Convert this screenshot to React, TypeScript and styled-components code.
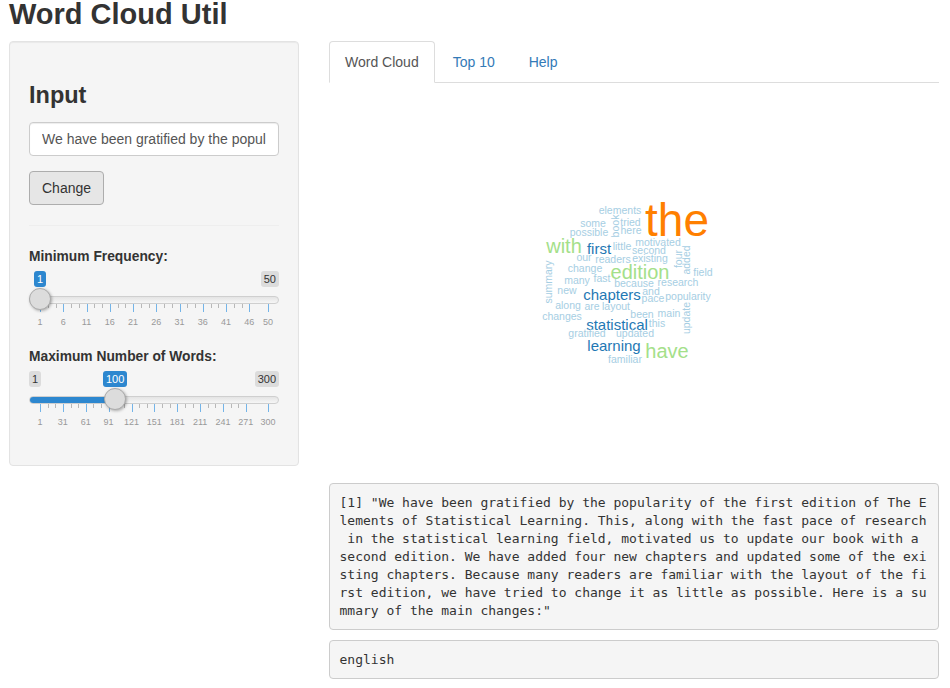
import React from 'react';
import styled, { createGlobalStyle } from 'styled-components';

const GlobalStyle = createGlobalStyle`
    html, body {
        margin: 0;
        background: #fff;
    }
    body {
        font-family: 'Liberation Sans', Arial, sans-serif;
        font-size: 14px;
        line-height: 20px;
        color: #333;
    }
    * {
        box-sizing: border-box;
    }
`;

const Page = styled.div`
    padding: 0 11px 0 9px;
`;

const Title = styled.h2`
    margin: 0 0 10px;
    height: 31px;
    font-size: 29px;
    line-height: 29px;
    font-weight: 700;
    color: #333;
`;

const Columns = styled.div`
    display: grid;
    grid-template-columns: 290px 610px;
    column-gap: 30px;
    align-items: start;
`;

const Well = styled.form`
    padding: 19px;
    background: #f5f5f5;
    border: 1px solid #e3e3e3;
    border-radius: 4px;
    box-shadow: inset 0 1px 1px rgba(0, 0, 0, 0.05);
`;

const Heading = styled.h3`
    margin: 21px 0 13px;
    font-size: 23.5px;
    line-height: 27px;
    font-weight: 700;
`;

const TextInput = styled.input`
    display: block;
    width: 100%;
    height: 34px;
    padding: 6px 12px;
    font: inherit;
    color: #555;
    background: #fff;
    border: 1px solid #ccc;
    border-radius: 4px;
    box-shadow: inset 0 1px 1px rgba(0, 0, 0, 0.075);
`;

const Button = styled.button`
    display: block;
    margin-top: 15px;
    height: 34px;
    padding: 6px 12px;
    font: inherit;
    color: #333;
    background: #e6e6e6;
    border: 1px solid #adadad;
    border-radius: 4px;
`;

const Divider = styled.hr`
    margin: 20px 0;
    border: 0;
    border-top: 1px solid #eee;
`;

const Field = styled.div`
    margin-bottom: 21px;
`;

const Label = styled.label`
    display: block;
    padding-top: 1px;
    margin-bottom: 4px;
    font-size: 13.8px;
    font-weight: 700;
`;

const SliderBox = styled.div`
    position: relative;
`;

const BadgeRow = styled.div`
    display: flex;
    justify-content: space-between;
    height: 16px;
`;

const Badge = styled.span`
    padding: 1px 3px;
    font-size: 11px;
    line-height: 14px;
    border-radius: 3px;
    color: #333;
    background: rgba(0, 0, 0, 0.1);
`;

const MaxBadge = styled(Badge)`
    margin-left: auto;
`;

const ValueBadge = styled(Badge)`
    position: absolute;
    top: 0;
    color: #fff;
    background: #2d87cf;
`;

const Track = styled.div`
    margin-top: 9px;
    height: 8px;
    overflow: hidden;
    background: linear-gradient(#e4e4e4, #f6f6f6);
    border: 1px solid #cfcfcf;
    border-radius: 8px;
`;

const TrackFill = styled.div`
    height: 8px;
    margin: -1px 0 0 -1px;
    background: #2d87cf;
`;

const Handle = styled.div`
    position: absolute;
    top: 17px;
    width: 22px;
    height: 22px;
    background: #dcdcdc;
    border: 1px solid #ababab;
    border-radius: 50%;
    box-shadow: 1px 1px 3px rgba(0, 0, 0, 0.3);
`;

const Scale = styled.div`
    position: relative;
    height: 21px;
`;

const Tick = styled.span<{ $major: boolean }>`
    position: absolute;
    top: 0;
    width: 1px;
    height: ${(p) => (p.$major ? 8 : 4)}px;
    background: ${(p) => (p.$major ? '#74b4e8' : '#b8b8b8')};
`;

const TickLabel = styled.span`
    position: absolute;
    top: 12px;
    transform: translateX(-50%);
    font-size: 9px;
    line-height: 12px;
    color: #999;
    white-space: nowrap;
`;

const Main = styled.div`
    min-width: 0;
`;

const Tabs = styled.ul`
    display: flex;
    margin: 0;
    padding: 0;
    height: 42px;
    list-style: none;
    border-bottom: 1px solid #ddd;
`;

const Tab = styled.li<{ $active?: boolean }>`
    height: 42px;
    margin-right: 2px;
    padding: 10px 15px;
    color: ${(p) => (p.$active ? '#555' : '#337ab7')};
    background: ${(p) => (p.$active ? '#fff' : 'transparent')};
    border: 1px solid ${(p) => (p.$active ? '#ddd' : 'transparent')};
    border-bottom-color: ${(p) => (p.$active ? '#fff' : 'transparent')};
    border-radius: 4px 4px 0 0;
`;

const CloudCanvas = styled.div`
    position: relative;
    height: 400px;
`;

const Word = styled.span<{ $x: number; $y: number; $size: number; $color: string; $up?: boolean }>`
    position: absolute;
    left: ${(p) => p.$x}px;
    top: ${(p) => p.$y}px;
    font-size: ${(p) => p.$size}px;
    line-height: 1;
    color: ${(p) => p.$color};
    white-space: nowrap;
    transform: translate(-50%, -50%) ${(p) => (p.$up ? 'rotate(-90deg)' : '')};
`;

const Pre = styled.pre`
    margin: 0 0 10px;
    padding: 9.5px;
    font-family: 'DejaVu Sans Mono', 'Liberation Mono', monospace;
    font-size: 13px;
    line-height: 18px;
    color: #333;
    background: #f5f5f5;
    border: 1px solid #ccc;
    border-radius: 4px;
    white-space: pre;
    overflow: hidden;
`;

const ORANGE = '#ff7f00';
const GREEN = '#a4e08a';
const BLUE = '#1f78b4';
const LIGHT = '#a6cee3';

// [word, centre x, centre y, size, colour, rotated], page coordinates
const words: [string, number, number, number, string, boolean?][] = [
    ['the', 677, 220, 46, ORANGE],
    ['elements', 620, 210, 10.5, LIGHT],
    ['book', 615, 226, 10.5, LIGHT, true],
    ['tried', 630.5, 222, 10.5, LIGHT],
    ['here', 631, 230, 10.5, LIGHT],
    ['some', 593, 223, 10.5, LIGHT],
    ['possible', 589, 232, 10.5, LIGHT],
    ['with', 564, 246, 20, GREEN],
    ['first', 599, 248, 15, BLUE],
    ['little', 622, 246, 10.5, LIGHT],
    ['motivated', 658, 242, 10.5, LIGHT],
    ['second', 649, 250, 10.5, LIGHT],
    ['existing', 650, 258, 10.5, LIGHT],
    ['four', 677.5, 259, 10.5, LIGHT, true],
    ['added', 685.5, 260, 10.5, LIGHT, true],
    ['our', 584, 257, 10.5, LIGHT],
    ['readers', 613, 259, 10.5, LIGHT],
    ['change', 585, 268, 10.5, LIGHT],
    ['edition', 640, 272, 20, GREEN],
    ['field', 703, 272, 10.5, LIGHT],
    ['summary', 548, 282, 10.5, LIGHT, true],
    ['many', 577, 280, 10.5, LIGHT],
    ['fast', 602, 278, 10.5, LIGHT],
    ['because', 634, 283, 10.5, LIGHT],
    ['research', 678, 282, 10.5, LIGHT],
    ['new', 567, 290, 10.5, LIGHT],
    ['chapters', 612, 294, 15, BLUE],
    ['and', 651, 291, 10.5, LIGHT],
    ['pace', 653, 298, 10.5, LIGHT],
    ['popularity', 688, 296, 10.5, LIGHT],
    ['along', 568, 305, 10.5, LIGHT],
    ['are', 592, 306, 10.5, LIGHT],
    ['layout', 616, 306, 10.5, LIGHT],
    ['been', 642, 314, 10.5, LIGHT],
    ['main', 669, 313, 10.5, LIGHT],
    ['update', 686, 318, 10.5, LIGHT, true],
    ['changes', 562, 316, 10.5, LIGHT],
    ['statistical', 617, 324, 15, BLUE],
    ['this', 657, 323, 10.5, LIGHT],
    ['gratified', 587, 333, 10.5, LIGHT],
    ['updated', 635, 333, 10.5, LIGHT],
    ['learning', 614, 345, 15, BLUE],
    ['have', 667, 351, 20, GREEN],
    ['familiar', 625, 359, 10.5, LIGHT],
];

const CANVAS_X = 329;
const CANVAS_Y = 83;

// usable run of the grid, inside the half-handle at each end
const GRID_START = 11;
const GRID_WIDTH = 228;

type SliderProps = {
    min: number;
    max: number;
    value: number;
    step: number;
    valueLeft: number;
    showMin?: boolean;
};

const Slider = ({ min, max, value, step, valueLeft, showMin }: SliderProps) => {
    const toX = (v: number) => GRID_START + ((v - min) / (max - min)) * GRID_WIDTH;
    const labels: number[] = [];
    for (let v = min; v < max - step / 2; v += step) labels.push(v);
    labels.push(max);
    const minors: number[] = [];
    labels.slice(0, -2).forEach((v) => {
        minors.push(toX(v + step / 3), toX(v + (2 * step) / 3));
    });
    const handleX = toX(value);
    return (
        <SliderBox>
            <BadgeRow>
                {showMin && <Badge>{min}</Badge>}
                <MaxBadge>{max}</MaxBadge>
            </BadgeRow>
            <Track>{value > min && <TrackFill style={{ width: handleX }} />}</Track>
            <Scale>
                {labels.map((v) => (
                    <Tick key={v} $major style={{ left: toX(v) }} />
                ))}
                {minors.map((x) => (
                    <Tick key={x} $major={false} style={{ left: x }} />
                ))}
                {labels.map((v) => (
                    <TickLabel key={v} style={{ left: toX(v) }}>
                        {v}
                    </TickLabel>
                ))}
            </Scale>
            <Handle style={{ left: handleX - 11 }} />
            <ValueBadge style={{ left: valueLeft }}>{value}</ValueBadge>
        </SliderBox>
    );
};

const passage = [
    '[1] "We have been gratified by the popularity of the first edition of The E',
    'lements of Statistical Learning. This, along with the fast pace of research',
    ' in the statistical learning field, motivated us to update our book with a',
    'second edition. We have added four new chapters and updated some of the exi',
    'sting chapters. Because many readers are familiar with the layout of the fi',
    'rst edition, we have tried to change it as little as possible. Here is a su',
    'mmary of the main changes:"',
].join('\n');

const App = () => (
    <Page>
        <GlobalStyle />
        <Title>Word Cloud Util</Title>
        <Columns>
            <Well>
                <Heading>Input</Heading>
                <TextInput readOnly value="We have been gratified by the popularity of the first edition" />
                <Button type="button">Change</Button>
                <Divider />
                <Field>
                    <Label>Minimum Frequency:</Label>
                    <Slider min={1} max={50} value={1} step={5} valueLeft={5} />
                </Field>
                <Field>
                    <Label>Maximum Number of Words:</Label>
                    <Slider showMin min={1} max={300} value={100} step={30} valueLeft={74} />
                </Field>
            </Well>
            <Main>
                <Tabs>
                    <Tab $active>Word Cloud</Tab>
                    <Tab>Top 10</Tab>
                    <Tab>Help</Tab>
                </Tabs>
                <CloudCanvas>
                    {words.map(([text, x, y, size, color, up]) => (
                        <Word key={text} $x={x - CANVAS_X} $y={y - CANVAS_Y} $size={size} $color={color} $up={up}>
                            {text}
                        </Word>
                    ))}
                </CloudCanvas>
                <Pre>{passage}</Pre>
                <Pre>english</Pre>
            </Main>
        </Columns>
    </Page>
);

export default App;
